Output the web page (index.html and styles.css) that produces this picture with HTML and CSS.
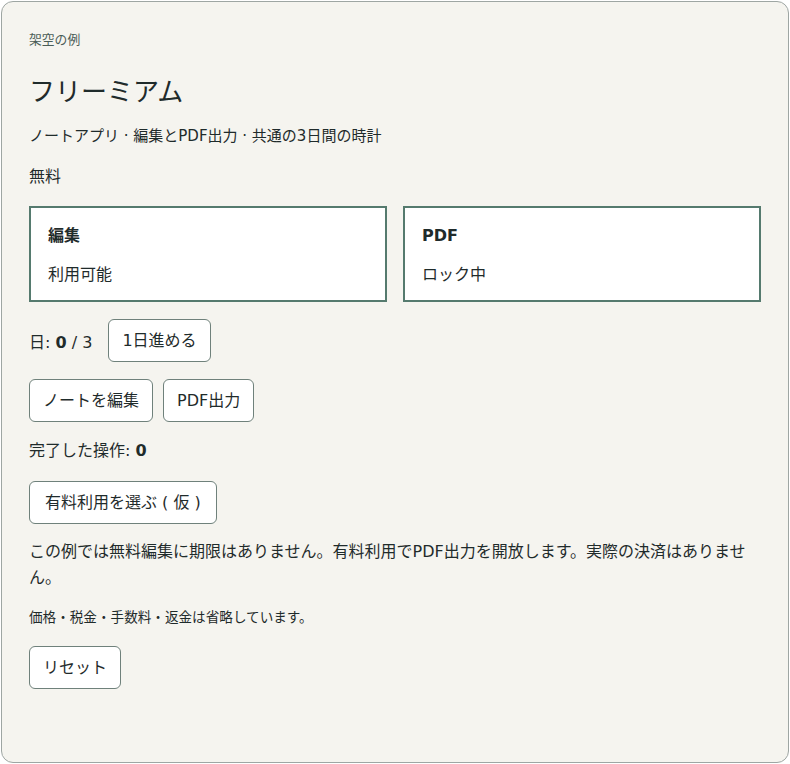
FILE: index.html
```html
<!DOCTYPE html>
<html lang="ja">
<head>
    <meta charset="UTF-8">
    <meta name="viewport" content="width=device-width, initial-scale=1.0">
    <title>フリーミアム</title>
    <link rel="stylesheet" href="styles.css">
</head>
<body>
    <section class="demoPanel">
        <p class="eyebrow">架空の例</p>
        <h1>フリーミアム</h1>
        <p class="subtitle">ノートアプリ · 編集とPDF出力 · 共通の3日間の時計</p>
        <p class="plan">無料</p>

        <!-- Feature cards -->
        <div class="featureGrid">
            <div class="featureCard">
                <h3>編集</h3>
                <p>利用可能</p>
            </div>
            <div class="featureCard">
                <h3>PDF</h3>
                <p>ロック中</p>
            </div>
        </div>

        <!-- Day counter -->
        <div class="row">
            <span class="dayLabel">日: <strong>0</strong> / 3</span>
            <button class="btn">1日進める</button>
        </div>

        <div class="row">
            <button class="btn">ノートを編集</button>
            <button class="btn">PDF出力</button>
        </div>

        <p class="count">完了した操作: <strong>0</strong></p>

        <div class="row paidRow">
            <button class="btn wide">有料利用を選ぶ ( 仮 )</button>
        </div>

        <p class="note">この例では無料編集に期限はありません。有料利用でPDF出力を開放します。実際の決済はありません。</p>
        <p class="smallNote">価格・税金・手数料・返金は省略しています。</p>

        <div class="row resetRow">
            <button class="btn">リセット</button>
        </div>
    </section>
</body>
</html>
```

FILE: styles.css
```css
body {
    margin: 0;
    font-family: "DejaVu Sans", "Noto Sans CJK JP", sans-serif;
    font-size: 16px;
    color: #1f2b2b;
    background: #ffffff;
}

.demoPanel {
    margin: 1px;
    height: 762px;
    box-sizing: border-box;
    border: 1px solid #9ea6a3;
    border-radius: 12px;
    background-color: #f5f4ef;
    padding: 29px 27px;
}

.eyebrow {
    margin: 0;
    font-size: 12.8px;
    line-height: 18px;
    color: #4a5c56;
}

h1 {
    margin: 26px 0 0;
    font-size: 26px;
    font-weight: 400;
    line-height: 34px;
}

.subtitle {
    margin: 16px 0 0;
    font-size: 15px;
    line-height: 22px;
}

.plan {
    margin: 18px 0 0;
    line-height: 24px;
}

.featureGrid {
    display: grid;
    grid-template-columns: 1fr 1fr;
    gap: 16px;
    margin-top: 17px;
}

.featureCard {
    background: #ffffff;
    border: 2px solid #557a6e;
    padding: 16px 17px 13px;
}

.featureCard h3 {
    margin: 0;
    font-size: 16px;
    font-weight: 600;
    line-height: 24px;
}

.featureCard p {
    margin: 15px 0 0;
    line-height: 24px;
}

.row {
    display: flex;
    align-items: center;
    gap: 10px;
    margin-top: 17px;
}

.dayLabel {
    margin-right: 6px;
}

.paidRow {
    margin-top: 18px;
}

.resetRow {
    margin-top: 19px;
}

.btn {
    font-family: inherit;
    font-size: 16px;
    color: #1f2b2b;
    background: #ffffff;
    border: 1px solid #6f817b;
    border-radius: 6px;
    padding: 9px 13px;
    line-height: 23px;
    cursor: pointer;
}

.btn.wide {
    padding: 9px 15px;
}

.count {
    margin: 17px 0 0;
    line-height: 24px;
}

.note {
    margin: 15px 0 0;
    line-height: 26px;
}

.smallNote {
    margin: 16px 0 0;
    font-size: 13.6px;
    line-height: 20px;
}
```
